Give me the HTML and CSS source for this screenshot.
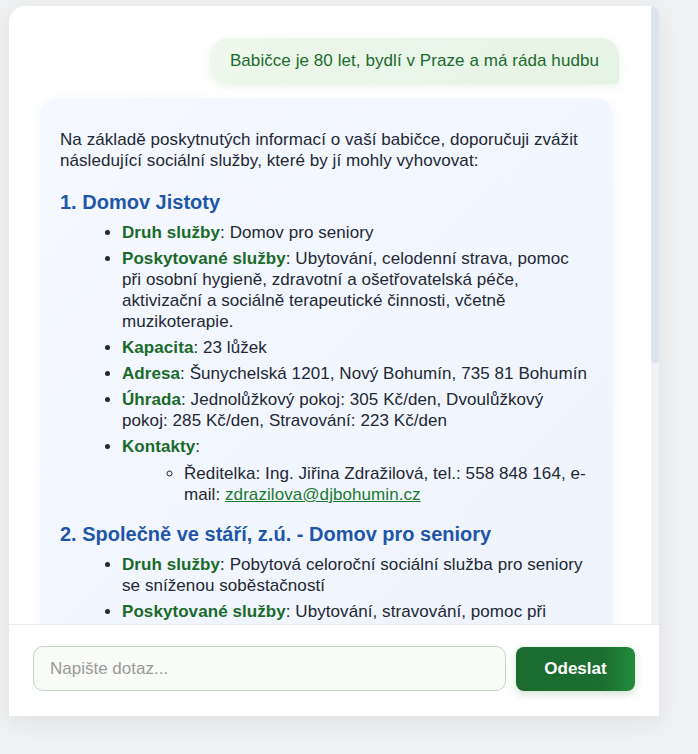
FILE: index.html
```html
<!DOCTYPE html>
<html lang="cs">
<head>
<meta charset="utf-8">
<title>Chat</title>
<link rel="stylesheet" href="styles.css">
</head>
<body>
<div class="chat-card">
  <div class="messages">
    <div class="msg user">Babičce je 80 let, bydlí v Praze a má ráda hudbu</div>
    <div class="msg bot">
      <p>Na základě poskytnutých informací o vaší babičce, doporučuji zvážit následující sociální služby, které by jí mohly vyhovovat:</p>
      <h3>1. Domov Jistoty</h3>
      <ul>
        <li><strong>Druh služby</strong>: Domov pro seniory</li>
        <li><strong>Poskytované služby</strong>: Ubytování, celodenní strava, pomoc při osobní hygieně, zdravotní a ošetřovatelská péče, aktivizační a sociálně terapeutické činnosti, včetně muzikoterapie.</li>
        <li><strong>Kapacita</strong>: 23 lůžek</li>
        <li><strong>Adresa</strong>: Šunychelská 1201, Nový Bohumín, 735 81 Bohumín</li>
        <li><strong>Úhrada</strong>: Jednolůžkový pokoj: 305 Kč/den, Dvoulůžkový pokoj: 285 Kč/den, Stravování: 223 Kč/den</li>
        <li><strong>Kontakty</strong>:
          <ul>
            <li>Ředitelka: Ing. Jiřina Zdražilová, tel.: 558 848 164, e-mail: <a href="#">zdrazilova@djbohumin.cz</a></li>
          </ul>
        </li>
      </ul>
      <h3>2. Společně ve stáří, z.ú. - Domov pro seniory</h3>
      <ul>
        <li><strong>Druh služby</strong>: Pobytová celoroční sociální služba pro seniory se sníženou soběstačností</li>
        <li><strong>Poskytované služby</strong>: Ubytování, stravování, pomoc při každodenních činnostech, zdravotní a ošetřovatelská péče, aktivizační činnosti.</li>
        <li><strong>Kapacita</strong>: 40 lůžek</li>
        <li><strong>Adresa</strong>: Praha</li>
        <li><strong>Úhrada</strong>: dle ceníku</li>
        <li><strong>Kontakty</strong>: viz web</li>
      </ul>
    </div>
  </div>
  <div class="scrollbar" aria-hidden="true"><div class="scrollbar-thumb"></div></div>
  <div class="composer">
    <input class="composer-input" type="text" placeholder="Napište dotaz...">
    <button class="composer-send" type="button">Odeslat</button>
  </div>
</div>
</body>
</html>
```
FILE: styles.css
```css
html, body {
  margin: 0;
  height: 100%;
}
body {
  background: #f0f1f2;
  font-family: "Liberation Sans", Arial, sans-serif;
  padding: 6px 0 0 9px;
  box-sizing: border-box;
}
.chat-card {
  position: relative;
  width: 650px;
  height: 710px;
  background: #fff;
  border-radius: 16px 8px 0 0;
  overflow: hidden;
  display: flex;
  flex-direction: column;
  box-shadow: 0 6px 24px rgba(0, 0, 0, 0.07);
}
.messages {
  flex: 1;
  min-height: 0;
  overflow-y: auto;
  scrollbar-width: none;
  padding: 32px 40px 20px 31px;
  display: flex;
  flex-direction: column;
}
.messages::-webkit-scrollbar {
  display: none;
}
.scrollbar {
  position: absolute;
  top: 0;
  right: 0;
  width: 8px;
  height: 618px;
  background: #f1f2f4;
}
.scrollbar-thumb {
  height: 357px;
  background: #dbe3ed;
  border-radius: 4px;
}
.msg {
  font-size: 17px;
  line-height: 21px;
  letter-spacing: 0.07px;
  flex-shrink: 0;
}
.user {
  align-self: flex-end;
  padding: 12px 20px 13px;
  margin-bottom: 14px;
  color: #1b6b2e;
  background: linear-gradient(135deg, #eef8ec, #e5f3e5);
  border-radius: 18px 18px 4px 18px;
  box-shadow: 0 3px 10px rgba(60, 140, 70, 0.10);
}
.bot {
  align-self: stretch;
  margin-right: 6px;
  padding: 15px 22px 15px 20px;
  color: #222834;
  background: linear-gradient(135deg, #f5f8ff, #eef3fc);
  border-radius: 18px;
  box-shadow: 0 3px 12px rgba(60, 90, 150, 0.06);
}
.bot p {
  margin: 16px 0 19px;
}
.bot h3 {
  font-size: 20px;
  line-height: 24px;
  letter-spacing: 0;
  color: #1f56a8;
  margin: 17px 0 8px;
}
.bot ul {
  margin: 0;
  padding-left: 62px;
}
.bot ul ul {
  margin: 6px 0 0;
  list-style-type: circle;
}
.bot li {
  margin-bottom: 5px;
}
.bot strong {
  color: #1a6b2a;
}
.bot a {
  color: #1b7a30;
}
.composer {
  flex-shrink: 0;
  border-top: 1px solid #e8ecef;
  padding: 21px 24px 25px;
  display: flex;
  gap: 10px;
  align-items: center;
}
.composer-input {
  flex: 1;
  height: 45px;
  box-sizing: border-box;
  border: 1px solid #c4d6c4;
  border-radius: 10px;
  background: #f8fbf6;
  padding: 0 16px;
  font-family: "Liberation Sans", Arial, sans-serif;
  font-size: 17px;
  color: #222;
  outline: none;
}
.composer-input::placeholder {
  color: #9a9a9a;
}
.composer-send {
  width: 119px;
  height: 44px;
  border: none;
  border-radius: 8px;
  background: linear-gradient(90deg, #1b6b2e 0%, #1b6e2f 72%, #228b3e 100%);
  color: #fff;
  font-family: "Liberation Sans", Arial, sans-serif;
  font-weight: bold;
  font-size: 17px;
  box-shadow: 0 3px 8px rgba(27, 107, 46, 0.2);
}
```
